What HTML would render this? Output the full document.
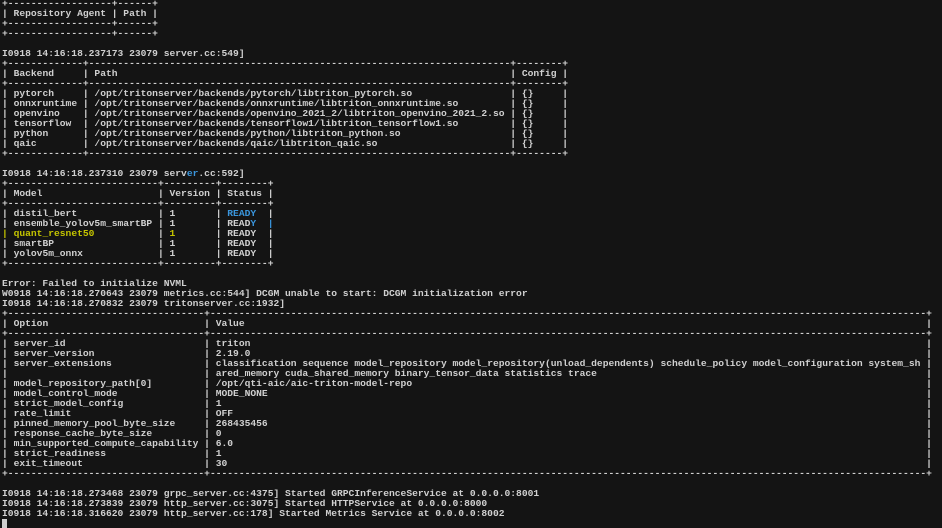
<!DOCTYPE html>
<html><head><meta charset="utf-8">
<style>
html,body{margin:0;padding:0;background:#141414;width:942px;height:528px;overflow:hidden}
pre{margin:-1px 0 0 0;padding:0 0 0 2px;font-family:"Liberation Mono",monospace;font-size:9.64px;line-height:10px;color:#d0d0d0;white-space:pre;font-weight:bold;letter-spacing:0}
.w{display:inline-block;overflow:hidden;vertical-align:top;white-space:pre;height:10px}
.d{display:inline-block;overflow:hidden;vertical-align:top;white-space:pre;height:10px}
.d::before{content:"------------------------------------------------------------------------------------------------------------------------------------------------------------------------------"}
.b{color:#3a96dd}
.y{color:#c4c400}
.cur{display:inline-block;width:5px;height:10px;background:#cfcfcf;vertical-align:top}
</style></head><body><pre>+<span class="d" style="width:18ch"></span>+<span class="d" style="width:6ch"></span>+
| Repository Agent | Path |
+<span class="d" style="width:18ch"></span>+<span class="d" style="width:6ch"></span>+
+<span class="d" style="width:18ch"></span>+<span class="d" style="width:6ch"></span>+

I0918 14:16:18.237173 23079 server.cc:549]
+<span class="d" style="width:13ch"></span>+<span class="d" style="width:73ch"></span>+<span class="d" style="width:8ch"></span>+
| <span class="w" style="width:11ch">Backend</span> | <span class="w" style="width:71ch">Path</span> | Config |
+<span class="d" style="width:13ch"></span>+<span class="d" style="width:73ch"></span>+<span class="d" style="width:8ch"></span>+
| <span class="w" style="width:11ch">pytorch</span> | <span class="w" style="width:71ch">/opt/tritonserver/backends/pytorch/libtriton_pytorch.so</span> | {}     |
| <span class="w" style="width:11ch">onnxruntime</span> | <span class="w" style="width:71ch">/opt/tritonserver/backends/onnxruntime/libtriton_onnxruntime.so</span> | {}     |
| <span class="w" style="width:11ch">openvino</span> | <span class="w" style="width:71ch">/opt/tritonserver/backends/openvino_2021_2/libtriton_openvino_2021_2.so</span> | {}     |
| <span class="w" style="width:11ch">tensorflow</span> | <span class="w" style="width:71ch">/opt/tritonserver/backends/tensorflow1/libtriton_tensorflow1.so</span> | {}     |
| <span class="w" style="width:11ch">python</span> | <span class="w" style="width:71ch">/opt/tritonserver/backends/python/libtriton_python.so</span> | {}     |
| <span class="w" style="width:11ch">qaic</span> | <span class="w" style="width:71ch">/opt/tritonserver/backends/qaic/libtriton_qaic.so</span> | {}     |
+<span class="d" style="width:13ch"></span>+<span class="d" style="width:73ch"></span>+<span class="d" style="width:8ch"></span>+

I0918 14:16:18.237310 23079 serv<span class="b">er</span>.cc:592]
+<span class="d" style="width:26ch"></span>+<span class="d" style="width:9ch"></span>+<span class="d" style="width:8ch"></span>+
| <span class="w" style="width:24ch">Model</span> | Version | Status |
+<span class="d" style="width:26ch"></span>+<span class="d" style="width:9ch"></span>+<span class="d" style="width:8ch"></span>+
| <span class="w" style="width:24ch">distil_bert</span> | 1       | <span class="b">READY</span>  |
| <span class="w" style="width:24ch">ensemble_yolov5m_smartBP</span> | 1       | READ<span class="b">Y</span>  <span class="b">|</span>
<span class="y">|</span> <span class="w y" style="width:24ch">quant_resnet50</span> | <span class="y">1</span>       | READY  |
| <span class="w" style="width:24ch">smartBP</span> | 1       | READY  |
| <span class="w" style="width:24ch">yolov5m_onnx</span> | 1       | READY  |
+<span class="d" style="width:26ch"></span>+<span class="d" style="width:9ch"></span>+<span class="d" style="width:8ch"></span>+

Error: Failed to initialize NVML
W0918 14:16:18.270643 23079 metrics.cc:544] DCGM unable to start: DCGM initialization error
I0918 14:16:18.270832 23079 tritonserver.cc:1932]
+<span class="d" style="width:34ch"></span>+<span class="d" style="width:124ch"></span>+
| <span class="w" style="width:32ch">Option</span> | <span class="w" style="width:122ch">Value</span> |
+<span class="d" style="width:34ch"></span>+<span class="d" style="width:124ch"></span>+
| <span class="w" style="width:32ch">server_id</span> | <span class="w" style="width:122ch">triton</span> |
| <span class="w" style="width:32ch">server_version</span> | <span class="w" style="width:122ch">2.19.0</span> |
| <span class="w" style="width:32ch">server_extensions</span> | <span class="w" style="width:123ch">classification sequence model_repository model_repository(unload_dependents) schedule_policy model_configuration system_sh</span>|
| <span class="w" style="width:32ch"></span> | <span class="w" style="width:122ch">ared_memory cuda_shared_memory binary_tensor_data statistics trace</span> |
| <span class="w" style="width:32ch">model_repository_path[0]</span> | <span class="w" style="width:122ch">/opt/qti-aic/aic-triton-model-repo</span> |
| <span class="w" style="width:32ch">model_control_mode</span> | <span class="w" style="width:122ch">MODE_NONE</span> |
| <span class="w" style="width:32ch">strict_model_config</span> | <span class="w" style="width:122ch">1</span> |
| <span class="w" style="width:32ch">rate_limit</span> | <span class="w" style="width:122ch">OFF</span> |
| <span class="w" style="width:32ch">pinned_memory_pool_byte_size</span> | <span class="w" style="width:122ch">268435456</span> |
| <span class="w" style="width:32ch">response_cache_byte_size</span> | <span class="w" style="width:122ch">0</span> |
| <span class="w" style="width:32ch">min_supported_compute_capability</span> | <span class="w" style="width:122ch">6.0</span> |
| <span class="w" style="width:32ch">strict_readiness</span> | <span class="w" style="width:122ch">1</span> |
| <span class="w" style="width:32ch">exit_timeout</span> | <span class="w" style="width:122ch">30</span> |
+<span class="d" style="width:34ch"></span>+<span class="d" style="width:124ch"></span>+

I0918 14:16:18.273468 23079 grpc_server.cc:4375] Started GRPCInferenceService at 0.0.0.0:8001
I0918 14:16:18.273839 23079 http_server.cc:3075] Started HTTPService at 0.0.0.0:8000
I0918 14:16:18.316620 23079 http_server.cc:178] Started Metrics Service at 0.0.0.0:8002
<span class="cur"></span></pre></body></html>
